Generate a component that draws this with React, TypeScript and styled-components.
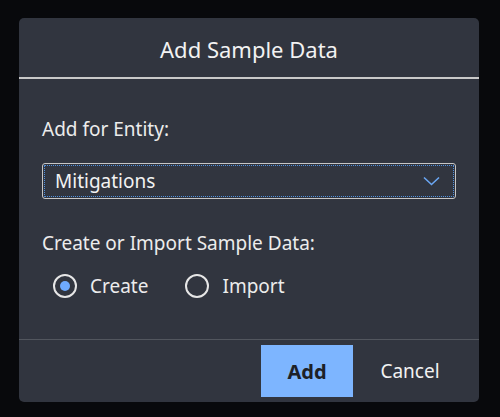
import React, { useState } from "react";
import styled, { createGlobalStyle } from "styled-components";

const Global = createGlobalStyle`
  html, body { margin: 0; padding: 0; background: #08090c; }
  body { font-family: "Noto Sans", "Open Sans", sans-serif; }
  #root { width: 500px; height: 417px; }
`;

const Page = styled.div`
  width: 500px;
  height: 417px;
  padding: 18px 0 0 19px;
  box-sizing: border-box;
`;

const Dialog = styled.div`
  width: 460px;
  height: 384px;
  background: #31353f;
  border-radius: 5px;
  display: flex;
  flex-direction: column;
  overflow: hidden;
`;

const Header = styled.div`
  height: 61px;
  padding-top: 3px;
  box-sizing: border-box;
  display: flex;
  align-items: center;
  justify-content: center;
  border-bottom: 2px solid #c9c9c9;
`;

const Title = styled.h1`
  margin: 0;
  font-size: 22px;
  font-weight: 400;
  color: #f2f2f2;
  line-height: 28px;
`;

const Body = styled.div`
  flex: 1;
  padding: 38px 23px 0 23px;
  display: flex;
  flex-direction: column;
`;

const Label = styled.div<{ $gap: number }>`
  font-size: 19px;
  line-height: 24px;
  color: #ececec;
  margin-bottom: ${(p) => p.$gap}px;
`;

const Select = styled.div`
  height: 36px;
  box-sizing: border-box;
  border: 1px solid #c6c6c6;
  border-radius: 3px;
  outline: 1px dotted #4f8fdc;
  outline-offset: -3px;
  display: flex;
  align-items: center;
  justify-content: space-between;
  padding: 0 15px 0 12px;
  margin-bottom: 32px;
  color: #f2f2f2;
  font-size: 19px;
`;

const Chevron = styled.svg`
  width: 17px;
  height: 10px;
  flex: none;
`;

const RadioGroup = styled.div`
  display: flex;
  align-items: center;
  gap: 37px;
  padding-left: 11px;
`;

const RadioOption = styled.label`
  display: flex;
  align-items: center;
  gap: 13px;
  font-size: 19px;
  line-height: 28px;
  color: #ececec;
  cursor: pointer;
`;

const RadioCircle = styled.span<{ $checked: boolean }>`
  width: 24px;
  height: 24px;
  box-sizing: border-box;
  border: 2px solid #e6e6e6;
  border-radius: 50%;
  display: flex;
  align-items: center;
  justify-content: center;
  &::after {
    content: "";
    width: 10px;
    height: 10px;
    border-radius: 50%;
    background: #6eaaff;
    display: ${(p) => (p.$checked ? "block" : "none")};
  }
`;

const Footer = styled.div`
  height: 63px;
  box-sizing: border-box;
  border-top: 1px solid #52565e;
  padding: 5px 23px 5px 0;
  display: flex;
  justify-content: flex-end;
  gap: 11px;
`;

const Button = styled.button<{ $primary?: boolean }>`
  width: 92px;
  height: 52px;
  border: none;
  border-radius: 0;
  font-family: inherit;
  font-size: ${(p) => (p.$primary ? 20 : 19)}px;
  font-weight: ${(p) => (p.$primary ? 700 : 400)};
  background: ${(p) => (p.$primary ? "#7db5ff" : "transparent")};
  color: ${(p) => (p.$primary ? "#1d2128" : "#f2f2f2")};
  cursor: pointer;
`;

export default function App() {
  const [mode, setMode] = useState<"create" | "import">("create");
  return (
    <>
      <Global />
      <Page>
        <Dialog>
          <Header>
            <Title>Add Sample Data</Title>
          </Header>
          <Body>
            <Label $gap={22}>Add for Entity:</Label>
            <Select>
              <span>Mitigations</span>
              <Chevron viewBox="0 0 17 10">
                <path d="M1 1.5 L8.5 8.5 L16 1.5" fill="none" stroke="#6aa6f2" strokeWidth="1.6" />
              </Chevron>
            </Select>
            <Label $gap={17}>Create or Import Sample Data:</Label>
            <RadioGroup>
              <RadioOption onClick={() => setMode("create")}>
                <RadioCircle $checked={mode === "create"} />
                Create
              </RadioOption>
              <RadioOption onClick={() => setMode("import")}>
                <RadioCircle $checked={mode === "import"} />
                Import
              </RadioOption>
            </RadioGroup>
          </Body>
          <Footer>
            <Button $primary>Add</Button>
            <Button>Cancel</Button>
          </Footer>
        </Dialog>
      </Page>
    </>
  );
}
